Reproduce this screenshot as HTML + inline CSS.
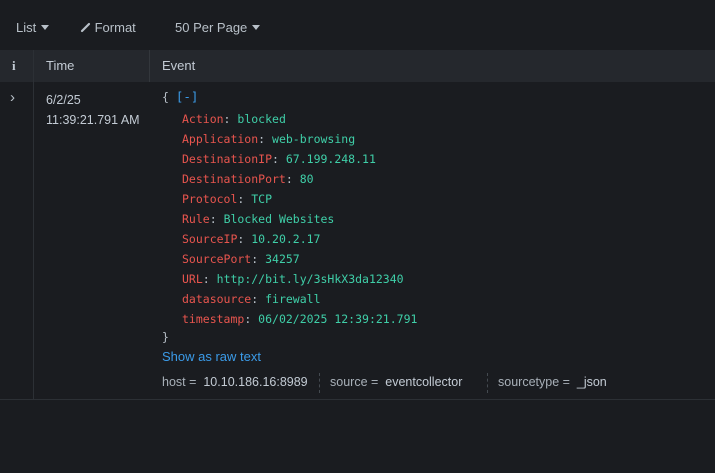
<!DOCTYPE html>
<html><head><style>
body{margin:0;width:715px;height:473px;background:#1a1c20;font-family:"Liberation Sans",sans-serif;color:#c3cbd4;overflow:hidden;position:relative}
.a{position:absolute;white-space:nowrap}
.tb{font-size:13px;top:20px;color:#b8c0c8}
.hdr{position:absolute;left:0;top:50px;width:715px;height:32px;background:#25282d}
.m{font-family:"DejaVu Sans Mono",monospace;font-size:11.5px}
.k{color:#e8554e}.v{color:#3fcfa8}.p{color:#b8c0c8}
.tri{display:inline-block;width:0;height:0;border-left:4px solid transparent;border-right:4px solid transparent;border-top:5px solid #b8c0c8;vertical-align:2px;margin-left:5px}
</style></head><body>
<div class="a tb" style="left:16px">List<span class="tri"></span></div>
<div class="a tb" style="left:80px"><svg width="11" height="11" viewBox="0 0 11 11" style="vertical-align:-1px"><path d="M2 9 L9 2" stroke="#b8c0c8" stroke-width="2.2" stroke-linecap="round"/></svg> Format</div>
<div class="a tb" style="left:175px">50 Per Page<span class="tri"></span></div>
<div class="hdr"></div>
<div class="a" style="left:33px;top:50px;width:1px;height:350px;background:#2c3035"></div>
<div class="a" style="left:149px;top:50px;width:1px;height:32px;background:#33373c"></div>
<div class="a" style="left:12px;top:58px;font-size:13px;font-weight:bold;font-family:'Liberation Serif',serif;color:#c3cbd4">i</div>
<div class="a" style="left:46px;top:58px;font-size:13px">Time</div>
<div class="a" style="left:162px;top:58px;font-size:13px">Event</div>
<div class="a" style="left:10px;top:89px;font-size:15px;color:#b8c0c8">›</div>
<div class="a" style="left:46px;top:90px;font-size:12.5px;line-height:20px">6/2/25<br>11:39:21.791 AM</div>
<div class="a m p" style="left:162px;top:89px">{ <span style="color:#3b9be8;font-size:12.5px">[-]</span></div>
<div class="m" style="position:absolute;left:182px;top:109px;line-height:20px;white-space:nowrap">
<span class="k">Action</span><span class="p">: </span><span class="v">blocked</span><br>
<span class="k">Application</span><span class="p">: </span><span class="v">web-browsing</span><br>
<span class="k">DestinationIP</span><span class="p">: </span><span class="v">67.199.248.11</span><br>
<span class="k">DestinationPort</span><span class="p">: </span><span class="v">80</span><br>
<span class="k">Protocol</span><span class="p">: </span><span class="v">TCP</span><br>
<span class="k">Rule</span><span class="p">: </span><span class="v">Blocked Websites</span><br>
<span class="k">SourceIP</span><span class="p">: </span><span class="v">10.20.2.17</span><br>
<span class="k">SourcePort</span><span class="p">: </span><span class="v">34257</span><br>
<span class="k">URL</span><span class="p">: </span><span class="v">http://bit.ly/3sHkX3da12340</span><br>
<span class="k">datasource</span><span class="p">: </span><span class="v">firewall</span><br>
<span class="k">timestamp</span><span class="p">: </span><span class="v">06/02/2025 12:39:21.791</span>
</div>
<div class="a m p" style="left:162px;top:330px">}</div>
<div class="a" style="left:162px;top:349px;font-size:13px;color:#3b9be8">Show as raw text</div>
<div class="a" style="left:162px;top:375px;font-size:12.5px;color:#a8b0b8">host = &nbsp;<span style="color:#c3cbd4">10.10.186.16:8989</span></div>
<div class="a" style="left:319px;top:373px;height:20px;border-left:1px dashed #444a50"></div>
<div class="a" style="left:330px;top:375px;font-size:12.5px;color:#a8b0b8">source = &nbsp;<span style="color:#c3cbd4">eventcollector</span></div>
<div class="a" style="left:487px;top:373px;height:20px;border-left:1px dashed #444a50"></div>
<div class="a" style="left:498px;top:375px;font-size:12.5px;color:#a8b0b8">sourcetype = &nbsp;<span style="color:#c3cbd4">_json</span></div>
<div class="a" style="left:0;top:399px;width:715px;height:1px;background:#2c3035"></div>
</body></html>
